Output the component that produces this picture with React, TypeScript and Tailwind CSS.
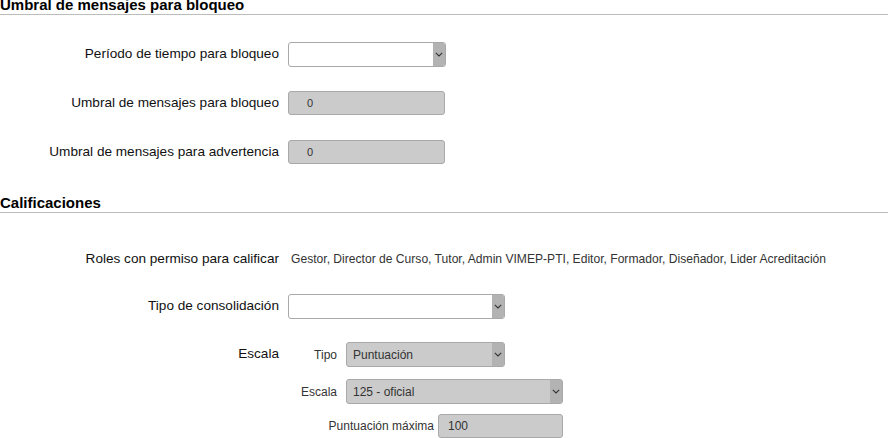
import React from 'react'

const Chevron = () => (
  <svg width="8" height="5" viewBox="0 0 8 5" className="block">
    <path d="M0.8 0.8 L4 4 L7.2 0.8" fill="none" stroke="#333" strokeWidth="1.1" />
  </svg>
)

function Select({ width, value, disabled }: { width: string; value?: string; disabled?: boolean }) {
  return (
    <div
      className={`flex h-[25px] ${width} overflow-hidden rounded-[3px] border border-[#a9a9a9] ${
        disabled ? 'bg-[#cbcbcb]' : 'bg-white'
      }`}
    >
      <span className="flex flex-1 items-center pl-[6px] text-[12px] text-[#333]">{value}</span>
      <span className="flex w-[12px] items-center justify-center bg-[#b3b3b3]">
        <Chevron />
      </span>
    </div>
  )
}

function Input({ width, value, pad }: { width: string; value: string; pad: string }) {
  return (
    <div
      className={`flex h-[24px] ${width} items-center rounded-[3px] border border-[#a9a9a9] bg-[#cbcbcb] ${pad} text-[#333]`}
    >
      {value}
    </div>
  )
}

function Row({ label, children, h = 'h-[25px]' }: { label: string; children: React.ReactNode; h?: string }) {
  return (
    <div className={`flex ${h} items-center`}>
      <div className="w-[288px] pr-[9px] text-right text-[13.6px] text-[#111]">{label}</div>
      {children}
    </div>
  )
}

function Header({ title, className }: { title: string; className?: string }) {
  return (
    <h2 className={`h-[15px] border-b border-[#bcbcbc] text-[15px] font-bold leading-[10px] text-black ${className ?? ''}`}>
      {title}
    </h2>
  )
}

export default function App() {
  return (
    <div className="h-[438px] w-[888px] overflow-hidden bg-white font-['Liberation_Sans',Arial,sans-serif]">
      <Header title="Umbral de mensajes para bloqueo" />

      <div className="mt-[27px] flex flex-col">
        <Row label="Período de tiempo para bloqueo">
          <Select width="w-[158px]" />
        </Row>
        <div className="mt-[24px]">
          <Row label="Umbral de mensajes para bloqueo" h="h-[24px]">
            <Input width="w-[157px]" value="0" pad="pl-[18px] text-[11px]" />
          </Row>
        </div>
        <div className="mt-[25px]">
          <Row label="Umbral de mensajes para advertencia" h="h-[24px]">
            <Input width="w-[157px]" value="0" pad="pl-[18px] text-[11px]" />
          </Row>
        </div>
      </div>

      <Header title="Calificaciones" className="mt-[34px]" />

      <div className="mt-[36px]">
        <Row label="Roles con permiso para calificar" h="h-[20px]">
          <span className="pl-[3px] text-[12.1px] text-[#333]">
            Gestor, Director de Curso, Tutor, Admin VIMEP-PTI, Editor, Formador, Diseñador, Lider Acreditación
          </span>
        </Row>
      </div>

      <div className="mt-[25px]">
        <Row label="Tipo de consolidación">
          <Select width="w-[217px]" />
        </Row>
      </div>

      <div className="mt-[23px] flex">
        <div className="flex h-[25px] w-[288px] items-center justify-end pr-[9px] text-[13.6px] text-[#111]">Escala</div>
        <div className="flex flex-col gap-[12px]">
          <div className="flex items-center">
            <span className="w-[58px] pr-[9px] text-right text-[12px] text-[#333]">Tipo</span>
            <Select width="w-[159px]" value="Puntuación" disabled />
          </div>
          <div className="flex items-center">
            <span className="w-[58px] pr-[9px] text-right text-[12px] text-[#333]">Escala</span>
            <Select width="w-[217px]" value="125 - oficial" disabled />
          </div>
          <div className="-mt-[2px] flex w-[275px] items-center justify-end">
            <span className="pr-[4px] text-[12px] text-[#333]">Puntuación máxima</span>
            <Input width="w-[125px]" value="100" pad="pl-[9px] text-[12px]" />
          </div>
        </div>
      </div>
    </div>
  )
}
